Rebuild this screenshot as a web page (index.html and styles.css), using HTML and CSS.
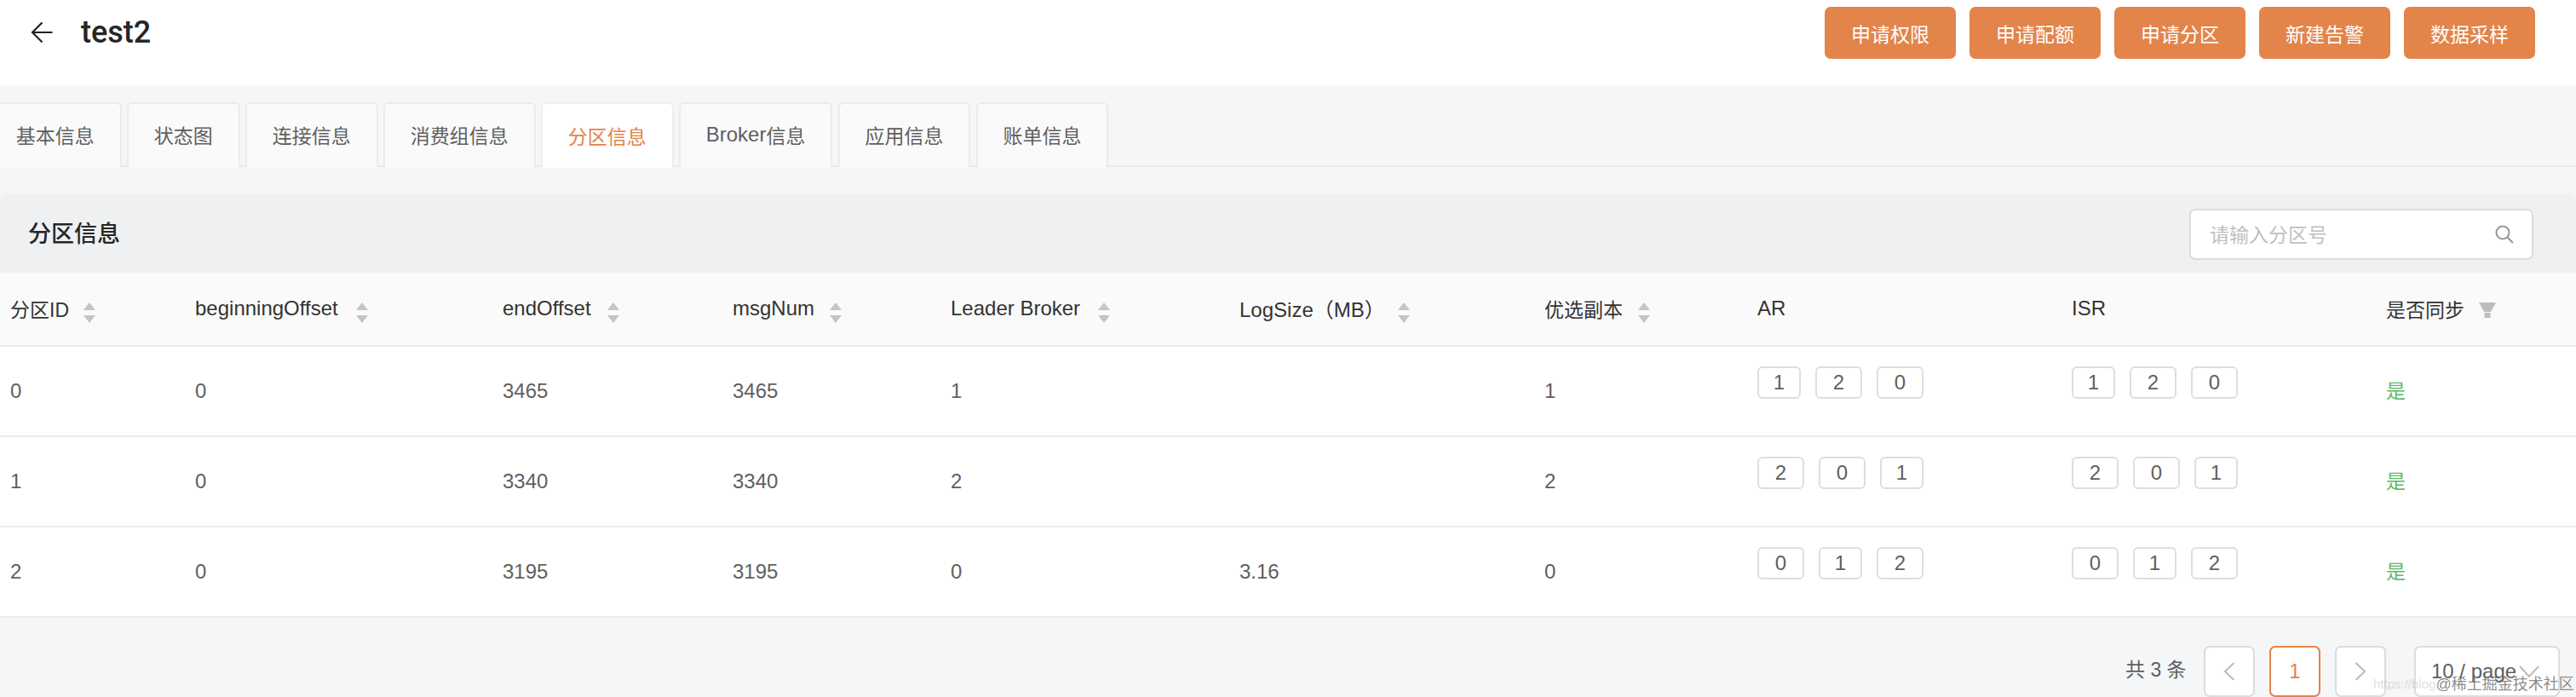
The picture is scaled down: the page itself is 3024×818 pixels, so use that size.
FILE: index.html
```html
<!DOCTYPE html>
<html lang="zh-CN">
<head>
<meta charset="utf-8">
<title>test2</title>
<link rel="stylesheet" href="styles.css">
</head>
<body>
<header class="topbar">
  <div class="title-group">
    <svg class="back" viewBox="0 0 26 26" width="26" height="26"><path d="M25.500 13H2M13.500 1.500 2 13l11.500 11.500" fill="none" stroke="#222" stroke-width="2.200"/></svg>
    <h1 class="title">test2</h1>
  </div>
  <div class="actions">
    <button class="btn">申请权限</button>
    <button class="btn">申请配额</button>
    <button class="btn">申请分区</button>
    <button class="btn">新建告警</button>
    <button class="btn">数据采样</button>
  </div>
</header>
<nav class="tabs">
  <a class="tab">基本信息</a>
  <a class="tab">状态图</a>
  <a class="tab">连接信息</a>
  <a class="tab">消费组信息</a>
  <a class="tab active">分区信息</a>
  <a class="tab"><span class="lat">Broker</span>信息</a>
  <a class="tab">应用信息</a>
  <a class="tab">账单信息</a>
</nav>
<section class="panel">
  <div class="panel-head">
    <h2 class="panel-title">分区信息</h2>
    <div class="search">
      <span class="placeholder">请输入分区号</span>
      <svg class="search-icon" viewBox="0 0 24 24" width="24" height="24"><circle cx="10" cy="10" r="7.500" fill="none" stroke="#999" stroke-width="2"/><path d="M15.500 15.500 22 22" stroke="#999" stroke-width="2.200"/></svg>
    </div>
  </div>
  <table class="grid">
    <colgroup>
      <col class="c1"><col class="c2"><col class="c3"><col class="c4"><col class="c5"><col class="c6"><col class="c7"><col class="c8"><col class="c9"><col class="c10">
    </colgroup>
    <thead>
      <tr>
        <th><span class="th-in"><span class="w-id cjk">分区ID</span><i class="sorter"></i></span></th>
        <th><span class="th-in"><span class="w-bo">beginningOffset</span><i class="sorter"></i></span></th>
        <th><span class="th-in"><span class="w-eo">endOffset</span><i class="sorter"></i></span></th>
        <th><span class="th-in"><span class="w-mn">msgNum</span><i class="sorter"></i></span></th>
        <th><span class="th-in"><span class="w-lb">Leader Broker</span><i class="sorter"></i></span></th>
        <th><span class="th-in"><span class="w-ls">LogSize（MB）</span><i class="sorter"></i></span></th>
        <th><span class="th-in"><span class="w-yx cjk">优选副本</span><i class="sorter"></i></span></th>
        <th>AR</th>
        <th>ISR</th>
        <th><span class="th-in"><span class="w-sy cjk">是否同步</span><svg class="filter" viewBox="0 0 20 18" width="20" height="18"><path d="M0 0h20l-6 11H6zM6.500 12h7v6h-7z" fill="#bdbdbd"/></svg></span></th>
      </tr>
    </thead>
    <tbody>
      <tr>
        <td>0</td><td>0</td><td>3465</td><td>3465</td><td>1</td><td></td><td>1</td>
        <td class="tags"><span class="tag one">1</span><span class="tag">2</span><span class="tag">0</span></td>
        <td class="tags"><span class="tag one">1</span><span class="tag">2</span><span class="tag">0</span></td>
        <td class="yes">是</td>
      </tr>
      <tr>
        <td>1</td><td>0</td><td>3340</td><td>3340</td><td>2</td><td></td><td>2</td>
        <td class="tags"><span class="tag">2</span><span class="tag">0</span><span class="tag one">1</span></td>
        <td class="tags"><span class="tag">2</span><span class="tag">0</span><span class="tag one">1</span></td>
        <td class="yes">是</td>
      </tr>
      <tr>
        <td>2</td><td>0</td><td>3195</td><td>3195</td><td>0</td><td>3.16</td><td>0</td>
        <td class="tags"><span class="tag">0</span><span class="tag one">1</span><span class="tag">2</span></td>
        <td class="tags"><span class="tag">0</span><span class="tag one">1</span><span class="tag">2</span></td>
        <td class="yes">是</td>
      </tr>
    </tbody>
  </table>
  <div class="pager">
    <span class="total">共 3 条</span>
    <span class="page"><svg viewBox="0 0 14 24" width="14" height="24"><path d="M12.500 2 2 12l10.500 10" fill="none" stroke="#bbb" stroke-width="2"/></svg></span>
    <span class="page current">1</span>
    <span class="page"><svg viewBox="0 0 14 24" width="14" height="24"><path d="M1.500 2 12 12 1.500 22" fill="none" stroke="#bbb" stroke-width="2"/></svg></span>
    <span class="size">10 / page<svg class="caret" viewBox="0 0 24 14" width="24" height="14"><path d="M1 1l11 12L23 1" fill="none" stroke="#bbb" stroke-width="2"/></svg></span>
  </div>
</section>
<div class="watermark"><span class="wm-url">https://blog</span><span class="wm-name">@稀土掘金技术社区</span></div>
</body>
</html>
```
FILE: styles.css
```css
* { box-sizing: border-box; }
html, body { margin: 0; padding: 0; }
body {
  width: 3024px;
  height: 818px;
  overflow: hidden;
  position: relative;
  background: #f4f6f8;
  font-family: "Liberation Sans", "Noto Sans CJK SC", sans-serif;
  font-size: 24px;
  color: #5f5f5f;
}
.topbar {
  height: 100px;
  background: #fff;
  display: flex;
  justify-content: space-between;
  align-items: flex-start;
  padding: 8px 48px 0 36px;
}
.title-group { display: flex; align-items: center; gap: 33px; height: 60px; }
.title { margin: 0; font-family: Roboto, "Liberation Sans", sans-serif; font-size: 36px; font-weight: 500; color: #262626; line-height: 60px; }
.back { flex: none; }
.actions { display: flex; gap: 16px; }
.btn {
  width: 154px;
  height: 61px;
  border: 0;
  border-radius: 7px;
  background: #e3844a;
  color: #fff;
  font-family: inherit;
  font-size: 23px;
  padding: 0;
}
.tabs {
  height: 96px;
  margin-left: -13px;
  padding-top: 20px;
  display: flex;
  gap: 6.500px;
  border-bottom: 2px solid #e9eaeb;
  font-size: 23px;
}
.tab {
  height: 76px;
  padding: 0 29.750px 2px;
  display: flex;
  align-items: center;
  background: #fafafa;
  border: 2px solid #ebebeb;
  border-bottom: 0;
  border-radius: 6px 6px 0 0;
}
.tab .lat { font-size: 24px; }
.tab.active { background: #fff; color: #e3844a; height: 77px; border-color: #efefef; }
.panel { margin-top: 32px; }
.panel-head {
  height: 92px;
  background: #eef0f2;
  border-radius: 6px 6px 0 0;
  display: flex;
  align-items: center;
  justify-content: space-between;
  padding: 0 50px 0 33px;
}
.panel-title { margin: 0 0 3px; font-size: 27px; font-weight: 500; color: #262626; }
.search {
  width: 404px;
  height: 60px;
  margin-top: 2px;
  background: #fff;
  border: 2px solid #dcdcdc;
  border-radius: 7px;
  display: flex;
  align-items: center;
  justify-content: space-between;
  padding: 0 20px 0 22px;
}
.placeholder { color: #bfbfbf; font-size: 23px; margin-bottom: 2px; }
.search-icon { flex: none; }
.grid {
  width: 3024px;
  table-layout: fixed;
  border-collapse: collapse;
  background: #fff;
}
.c1 { width: 217px; } .c2 { width: 361px; } .c3 { width: 270px; } .c4 { width: 256px; }
.c5 { width: 339px; } .c6 { width: 358px; } .c7 { width: 250px; } .c8 { width: 369px; }
.c9 { width: 369px; } .c10 { width: 235px; }
th {
  height: 86px;
  padding: 0 12px 2px;
  background: #fafafa;
  color: #333;
  font-weight: 400;
  text-align: left;
  border-bottom: 2px solid #ececec;
}
td {
  height: 106px;
  padding: 0 12px;
  border-bottom: 2px solid #ececec;
}
.cjk { font-size: 23px; }
.th-in { display: flex; align-items: center; }
.w-id { width: 86px; } .w-bo { width: 189px; } .w-eo { width: 123px; } .w-mn { width: 114px; }
.w-lb { width: 173px; } .w-ls { width: 186px; } .w-yx { width: 110px; } .w-sy { width: 109px; }
.sorter {
  flex: none;
  width: 15px;
  height: 24px;
  margin-top: 10px;
  display: flex;
  flex-direction: column;
  justify-content: space-between;
}
.sorter::before, .sorter::after { content: ""; display: block; width: 0; height: 0; border-left: 7.500px solid transparent; border-right: 7.500px solid transparent; }
.sorter::before { border-bottom: 9px solid #c4c4c4; }
.sorter::after { border-top: 9px solid #c4c4c4; }
.filter { flex: none; margin-top: 4px; }
td.tags { padding-bottom: 20px; vertical-align: middle; white-space: nowrap; }
.tag {
  display: inline-flex;
  align-items: center;
  justify-content: center;
  width: 55px;
  height: 38px;
  margin-right: 17px;
  border: 2px solid #dedede;
  border-radius: 6px;
  background: #fff;
}
.tag.one { width: 51px; }
td.yes { color: #5cb860; font-size: 23px; padding-bottom: 4px; }
.pager {
  height: 94px;
  display: flex;
  align-items: flex-start;
  padding: 33px 0 0 2495px;
}
.total { width: 92px; line-height: 56px; font-size: 23px; }
.page {
  flex: none;
  width: 60px;
  height: 60px;
  margin-right: 17px;
  background: #fff;
  border: 2px solid #dcdcdc;
  border-radius: 7px;
  display: flex;
  align-items: center;
  justify-content: center;
}
.page.current { border-color: #e3844a; color: #e3844a; }
.size {
  flex: none;
  width: 171px;
  height: 60px;
  margin-left: 16px;
  background: #fff;
  border: 2px solid #dcdcdc;
  border-radius: 7px;
  display: flex;
  align-items: center;
  padding-left: 18px;
  white-space: nowrap;
}
.caret { flex: none; margin-left: 3px; }
.watermark {
  position: absolute;
  left: 2786px;
  bottom: 2px;
  display: flex;
  align-items: center;
  font-size: 18px;
  line-height: 26px;
  color: rgba(110, 110, 110, .8);
}
.wm-url { color: rgba(190, 190, 190, .5); font-size: 15px; }
```
